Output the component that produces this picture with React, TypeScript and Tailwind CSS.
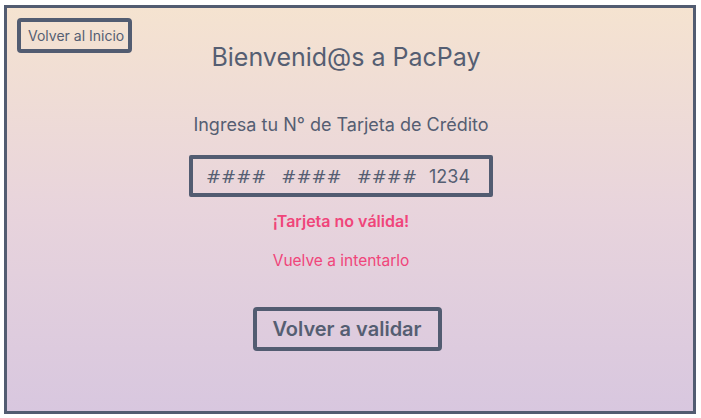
import React from "react";

function App() {
  return (
    <div className="w-[701px] h-[418px] bg-white p-[4px] pt-[5px] font-['Inter',sans-serif] text-[#555e72]">
      <div className="w-[692px] h-[409px] border-[3px] border-[#525c71] bg-gradient-to-b from-[#f5e3d0] via-[#e8d4dc] to-[#d8c7df] relative">
        <div className="absolute left-[10px] top-[10px] border-[4px] border-[#525c71] rounded-[4px] w-[115px] h-[35px] pl-[7px] flex items-center text-[14px] text-[#555e72]">
          Volver al Inicio
        </div>
        <div className="flex flex-col items-center pr-[18px]">
          <h1 className="mt-[33px] ml-[10px] text-[25px] leading-[32px] text-[#555e72]">Bienvenid@s a PacPay</h1>
          <p className="mt-[40px] text-[18px] leading-[24px]">Ingresa tu N° de Tarjeta de Crédito</p>
          <div className="mt-[18px] w-[304px] h-[42px] border-[4px] border-[#525c71] rounded-[2px] flex items-center pl-[13px] whitespace-pre">
            <div className="flex gap-[15px] font-['DejaVu_Sans',sans-serif] text-[18px]">
              <span>####</span>
              <span>####</span>
              <span>####</span>
            </div>
            <span className="ml-[12px] text-[18px]">1234</span>
          </div>
          <p className="mt-[14px] text-[16px] leading-[20px] font-semibold text-[#f0457a]">¡Tarjeta no válida!</p>
          <p className="mt-[20px] text-[15.5px] leading-[20px] text-[#f0457a]">Vuelve a intentarlo</p>
          <button className="mt-[36px] ml-[12px] w-[189px] h-[44px] border-[4px] border-[#525c71] rounded-[4px] text-[20px] font-semibold text-[#555e72]">
            Volver a validar
          </button>
        </div>
      </div>
    </div>
  );
}

export default App;
